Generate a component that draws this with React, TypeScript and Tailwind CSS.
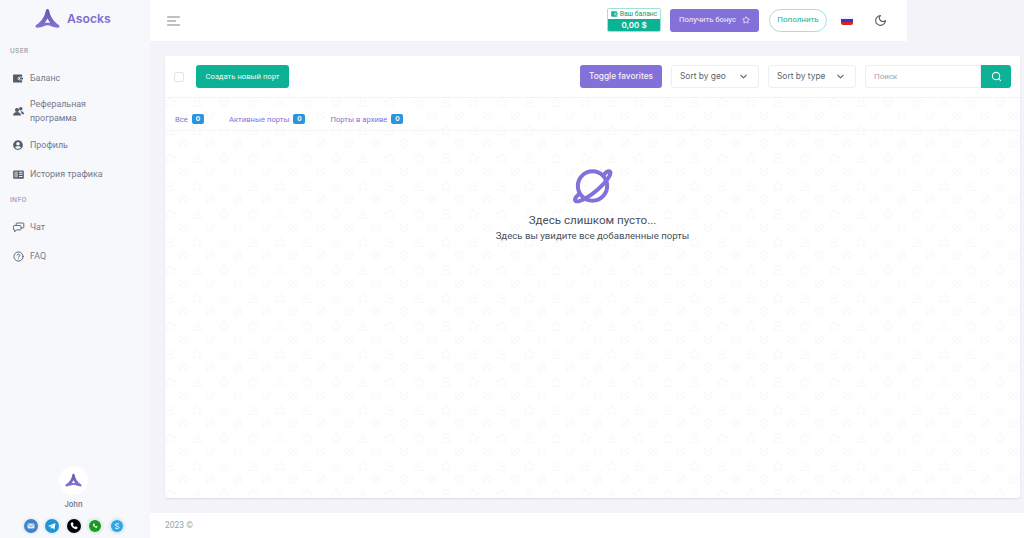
import React from "react";
import { LuChevronDown, LuCircleHelp, LuMoon, LuSearch, LuStar } from "react-icons/lu";
import { FaUserCircle } from "react-icons/fa";

const Logo = ({ className, id }: { className: string; id: string }) => (
  <svg viewBox="0 0 26 22" className={className}>
    <defs>
      <linearGradient id={id} x1="0" y1="0" x2="0" y2="1">
        <stop offset="0" stopColor="#5d5aa8" />
        <stop offset="1" stopColor="#8b70dc" />
      </linearGradient>
    </defs>
    <path
      fill={`url(#${id})`}
      fillRule="evenodd"
      d="M13 0.5c1 0 1.500.8 1.800 2 .8 5 3.600 10.500 10 14.800 1.200 1 .8 2.700-.8 2.700-2.500.1-4.500-.4-6.500-1.200-1.500-.7-3-1.200-4.500-1.200s-3 .5-4.500 1.200c-2 .8-4 1.300-6.500 1.200-1.600 0-2-1.700-.8-2.700 6.400-4.300 9.200-9.800 10-14.800.3-1.200.8-2 1.800-2zM13 10.500l-2.800 4.800c1.800-.5 3.800-.5 5.600 0z"
    />
  </svg>
);

const WalletIcon = ({ className, color = "#555b68" }: { className: string; color?: string }) => (
  <svg viewBox="0 0 11 10" className={className}>
    <path
      fill={color}
      fillRule="evenodd"
      d="M1 .5h8.500a.6.600 0 0 1 .6.600V3H7a2 2 0 0 0 0 4h3.100v1.900a.6.600 0 0 1-.6.600H1a1 1 0 0 1-1-1v-7a1 1 0 0 1 1-1z"
    />
    <path fill={color} d="M7 3.800h4v2.400H7a1.200 1.200 0 0 1 0-2.400z" />
    <circle cx="7.300" cy="5" r=".7" fill="#fff" />
  </svg>
);

const UsersIcon = () => (
  <svg viewBox="0 0 11 10" className="w-[11px] h-[10px]" fill="#555b68">
    <circle cx="4" cy="4" r="2.100" />
    <path d="M0 9.500c0-2.200 1.700-3.500 4-3.500s4 1.300 4 3.500z" />
    <circle cx="7.800" cy="2.700" r="1.700" />
    <path d="M7.500 5.200c1.900-.3 3.500.9 3.500 3H8.900c-.2-1.100-.7-2.200-1.400-3z" />
  </svg>
);

const HistoryIcon = () => (
  <svg viewBox="0 0 12 12" className="w-[11px] h-[11px]">
    <path fill="#555b68" fillRule="evenodd" d="M1 1.500h10a.8.800 0 0 1 .8.800v7.400a.8.800 0 0 1-.8.800H1a.8.800 0 0 1-.8-.800V2.300A.8.800 0 0 1 1 1.500zM6.700 3v1h3.600V3zm0 2.300v1h3.600v-1zm0 2.300v1h3.600v-1z" />
    <rect x="1.500" y="2.800" width="3.800" height="6.400" fill="#a5a8b1" />
  </svg>
);

const ChatIcon = () => (
  <svg viewBox="0 0 12 11" className="w-[12px] h-[11px]" fill="none" stroke="#555b68" strokeWidth=".9" strokeLinejoin="round">
    <path d="M1.200 3.500h6a.7.700 0 0 1 .7.700v3a.7.700 0 0 1-.7.700H3.500L1.800 9.800V7.900h-.6a.7.700 0 0 1-.7-.7v-3a.7.700 0 0 1 .7-.7z" />
    <path d="M3.200 3.300V1.700a.7.700 0 0 1 .7-.7h6.200a.7.700 0 0 1 .7.700v3.500a.7.700 0 0 1-.7.700H8" />
  </svg>
);

const Planet = () => (
  <svg viewBox="0 0 40 40" fill="none" stroke="#8370d8" strokeWidth="3.900" strokeLinecap="round" className="w-[41px] h-[41px]">
    <circle cx="20" cy="20.500" r="14.300" />
    <path d="M31 9.500c2-2.500 4.500-4 6-3.200 2.300 1.800-3 9.800-11.500 17.300S6.500 37.300 3.500 35c-1.600-1.500.6-4.300 3.400-6.800" />
  </svg>
);

const Item = ({ icon, children }: { icon: React.ReactNode; children: React.ReactNode }) => (
  <div className="flex items-center pl-[13px] text-[8.900px] leading-[14px] text-[#74788a]">
    <span className="w-[17px] shrink-0 flex items-center text-[#555b68]">{icon}</span>
    <span>{children}</span>
  </div>
);

const Section = ({ children }: { children: React.ReactNode }) => (
  <div className="pl-[10px] font-['Inter',sans-serif] text-[6.500px] leading-[10px] font-semibold tracking-[0.05em] text-[#a3a7b0]">{children}</div>
);

const Social = ({ bg, children }: { bg: string; children: React.ReactNode }) => (
  <span className="w-[14px] h-[14px] rounded-full flex items-center justify-center ring-2 ring-[#e9eff6]" style={{ background: bg }}>
    <svg viewBox="0 0 14 14" className="w-[14px] h-[14px]">{children}</svg>
  </span>
);

const Tab = ({ label }: { label: string }) => (
  <div className="flex items-center gap-[4px] text-[7.700px] text-[#8370d8]">
    <span>{label}</span>
    <span className="w-[12px] h-[10px] rounded-[2px] bg-[#2a95dc] text-white font-['Inter',sans-serif] text-[6.500px] font-bold leading-[10px] text-center">0</span>
  </div>
);

const Select = ({ label, w }: { label: string; w: string }) => (
  <div className={`${w} h-[23px] bg-white border border-[#eceef2] rounded-[3px] flex items-center justify-between pl-[8px] pr-[9px] font-['Inter',sans-serif] text-[8.400px] text-[#5b5f6b]`}>
    <span>{label}</span>
    <LuChevronDown className="w-[11px] h-[11px] text-[#555b68]" strokeWidth={2.200} />
  </div>
);

const PatternBg = () => (
  <svg className="absolute inset-0 w-full h-full pointer-events-none">
    <defs>
      <g id="pp" fill="none" stroke="#f7f7fa" strokeWidth=".9">
        <circle cx="0" cy="-2" r="2.500" />
        <path d="M-4.500 4.500c0-2.500 2-4 4.500-4s4.500 1.500 4.500 4z" />
      </g>
      <g id="ps" fill="none" stroke="#f7f7fa" strokeWidth=".9">
        <path d="M0-5l1.700 3.300 3.700.6-2.700 2.500.7 3.600L0 3.200-3.400 5l.7-3.600-2.700-2.500 3.700-.6z" />
      </g>
      <g id="pl" fill="none" stroke="#f7f7fa" strokeWidth=".9">
        <circle cx="0" cy="0" r="4" />
        <path d="M-4.500 3.500l9-7M-1 -1l2.500 2.500" />
      </g>
      <pattern id="paw" x="0" y="0" width="83" height="56" patternUnits="userSpaceOnUse">
        <use href="#pp" x="5" y="18" />
        <use href="#ps" x="32" y="18" />
        <use href="#pp" x="59" y="18" />
        <use href="#pl" x="18" y="31" />
        <use href="#pl" x="45" y="31" />
        <use href="#pl" x="73" y="31" />
        <use href="#ps" x="5" y="46" />
        <use href="#pp" x="32" y="46" />
        <use href="#ps" x="59" y="46" />
        <use href="#pl" x="18" y="3" />
        <use href="#pl" x="45" y="3" />
        <use href="#pl" x="73" y="3" />
      </pattern>
    </defs>
    <rect width="100%" height="100%" fill="url(#paw)" />
  </svg>
);

export default function App() {
  return (
    <div className="w-[1024px] h-[538px] flex overflow-hidden bg-[#f3f3f9] font-['Roboto',sans-serif]">
      <aside className="w-[150px] shrink-0 bg-[#f7f8fb] flex flex-col">
        <div className="h-[41px] flex items-center pl-[35px] gap-[7px] pb-[3px]">
          <Logo id="lg1" className="w-[25px] h-[22px]" />
          <span className="font-['Inter',sans-serif] text-[12.200px] font-semibold text-[#7c6cd0]">Asocks</span>
        </div>
        <div className="mt-[4px] pt-[1px]"><Section>USER</Section></div>
        <div className="mt-[15px] flex flex-col">
          <div className="h-[14px]"><Item icon={<WalletIcon className="w-[10px] h-[9px]" />}>Баланс</Item></div>
          <div className="mt-[12px]"><Item icon={<UsersIcon />}>Реферальная<br />программа</Item></div>
          <div className="mt-[13px] h-[14px]"><Item icon={<FaUserCircle className="w-[10px] h-[10px]" />}>Профиль</Item></div>
          <div className="mt-[15px] h-[14px]"><Item icon={<HistoryIcon />}>История трафика</Item></div>
        </div>
        <div className="mt-[14px]"><Section>INFO</Section></div>
        <div className="mt-[15px] flex flex-col gap-[15px]">
          <Item icon={<ChatIcon />}>Чат</Item>
          <Item icon={<LuCircleHelp className="w-[11px] h-[11px]" />}>FAQ</Item>
        </div>
        <div className="mt-auto flex flex-col items-center pb-[5px] pr-[3px]">
          <div className="w-[29px] h-[29px] rounded-full bg-white flex items-center justify-center">
            <Logo id="lg2" className="w-[17px] h-[15px]" />
          </div>
          <div className="mt-[4px] font-['Inter',sans-serif] text-[7.500px] font-semibold text-[#7a7d88] leading-[12px]">John</div>
          <div className="mt-[8px] flex gap-[7.500px]">
            <Social bg="#3f83c9"><rect x="3.500" y="4.500" width="7" height="5" rx="1" fill="#dbe8f6" /><path d="M3.500 5l3.500 2.500L10.500 5" stroke="#3f83c9" strokeWidth=".6" fill="none" /></Social>
            <Social bg="#1f96d3"><path d="M3 7l7.500-3-1.200 6.500-2.200-1.700-1.200 1.100-.2-1.900 3.200-2.500-4 2.200z" fill="#fff" /></Social>
            <Social bg="#000"><path d="M4.500 3.500l1.300-.3.800 2-.8.800c.4 1 1.100 1.700 2 2.100l.8-.8 2 .8-.3 1.400c-.2.500-1 .8-1.700.7C6.200 9.700 4.200 7.700 3.700 5.300c-.1-.8.300-1.500.8-1.800z" fill="#fff" /></Social>
            <Social bg="#dff0e6"><circle cx="7" cy="7" r="6" fill="#1c9b22" /><path d="M5.500 4.500l.8-.1.500 1.200-.5.600c.3.600.8 1 1.400 1.300l.6-.5 1.100.5-.1.800c-.4.600-1.200.6-2 .3-1.100-.4-2-1.300-2.300-2.500-.1-.7 0-1.300.5-1.600z" fill="#fff" /></Social>
            <Social bg="#cfeaf8"><circle cx="7" cy="7" r="6" fill="#30a6e2" /><path d="M9 5.300C8.500 4.600 5.200 4.300 5.200 5.800S9 7.100 9 8.500 5.500 9.600 5 8.700" stroke="#fff" strokeWidth="1" fill="none" /></Social>
          </div>
        </div>
      </aside>

      <div className="flex-1 flex flex-col min-w-0">
        <header className="w-[757px] h-[41px] shrink-0 bg-white flex items-center pl-[17px]">
          <svg viewBox="0 0 13 10" className="w-[13px] h-[10px]" stroke="#7d818c" strokeWidth="1.200" strokeLinecap="round">
            <path d="M.6 1h11.800M.6 5h8M.6 9h11.800" />
          </svg>
          <div className="ml-auto flex items-center mb-[1px]">
            <div className="w-[54px] h-[24px] rounded-[2px] border border-[#9fe3d5] flex flex-col overflow-hidden">
              <div className="h-[10px] flex items-center justify-center gap-[2px] text-[6.800px] text-[#0a9a82] bg-white">
                <WalletIcon className="w-[7px] h-[6px]" color="#0db296" />
                <span>Ваш баланс</span>
              </div>
              <div className="flex-1 bg-[#0db296] text-white text-[8px] font-['Inter',sans-serif] font-semibold flex items-center justify-center">0,00 $</div>
            </div>
            <div className="ml-[9px] w-[89px] h-[23px] rounded-[3px] bg-[#8370d8] text-[#f4f2fc] text-[7.700px] flex items-center justify-center gap-[6px]">
              <span>Получить бонус</span>
              <LuStar className="w-[8px] h-[8px]" strokeWidth={2.500} />
            </div>
            <div className="ml-[10px] w-[58px] h-[23px] rounded-full border border-[#9fe3d5] text-[#0db296] text-[8px] flex items-center justify-center">Пополнить</div>
            <div className="ml-[14px] w-[12px] h-[9px] rounded-[2px] overflow-hidden flex flex-col">
              <div className="flex-1 bg-[#f4f4f6]" />
              <div className="flex-1 bg-[#2b3fb8]" />
              <div className="flex-1 bg-[#d8232f]" />
            </div>
            <LuMoon className="ml-[21px] mr-[20px] w-[13px] h-[13px] text-[#555b68]" />
          </div>
        </header>

        <main className="flex-1 pt-[15px] pb-[15px] pl-[15px] pr-[4px] min-h-0">
          <section className="relative h-full bg-white rounded-[2px] shadow-[0_1px_2px_rgba(56,65,74,0.12)] flex flex-col overflow-hidden">
            <PatternBg />
            <div className="relative bg-white h-[42px] shrink-0 flex items-center pl-[9px] pr-[9px] border-b border-[#f3f3f6]">
              <span className="w-[10px] h-[10px] rounded-[2px] border border-[#e3e5ea] bg-white" />
              <div className="ml-[12px] w-[93px] h-[23px] rounded-[3px] bg-[#0db296] text-[#f0fbf8] text-[7.700px] flex items-center justify-center">Создать новый порт</div>
              <div className="ml-auto w-[82px] h-[23px] rounded-[3px] bg-[#8370d8] text-[#f4f2fc] font-['Inter',sans-serif] text-[8.300px] font-medium flex items-center justify-center">Toggle favorites</div>
              <div className="ml-[9px]"><Select label="Sort by geo" w="w-[88px]" /></div>
              <div className="ml-[9px]"><Select label="Sort by type" w="w-[88px]" /></div>
              <div className="ml-[9px] w-[146px] h-[23px] flex">
                <div className="flex-1 bg-white border border-[#eceef2] rounded-l-[3px] pl-[8px] text-[8px] leading-[21px] text-[#9ea1ab]">Поиск</div>
                <div className="w-[30px] bg-[#0db296] rounded-r-[3px] flex items-center justify-center text-white">
                  <LuSearch className="w-[11px] h-[11px]" strokeWidth={2.200} />
                </div>
              </div>
            </div>
            <div className="relative h-[33px] shrink-0 flex items-center pl-[10px] pt-[11px] gap-[25px] border-b border-[#f5f5f8]">
              <Tab label="Все" />
              <Tab label="Активные порты" />
              <Tab label="Порты в архиве" />
            </div>
            <div className="relative flex flex-col items-center pt-[34px]">
              <Planet />
              <div className="mt-[6px] text-[11.600px] leading-[16px] text-[#495057]">Здесь слишком пусто...</div>
              <div className="mt-[1px] text-[9.650px] leading-[14px] text-[#495057]">Здесь вы увидите все добавленные порты</div>
            </div>
          </section>
        </main>

        <footer className="h-[25px] shrink-0 bg-white pl-[15px] flex items-center text-[8.500px] text-[#9a9fa9]">2023 ©</footer>
      </div>
    </div>
  );
}
